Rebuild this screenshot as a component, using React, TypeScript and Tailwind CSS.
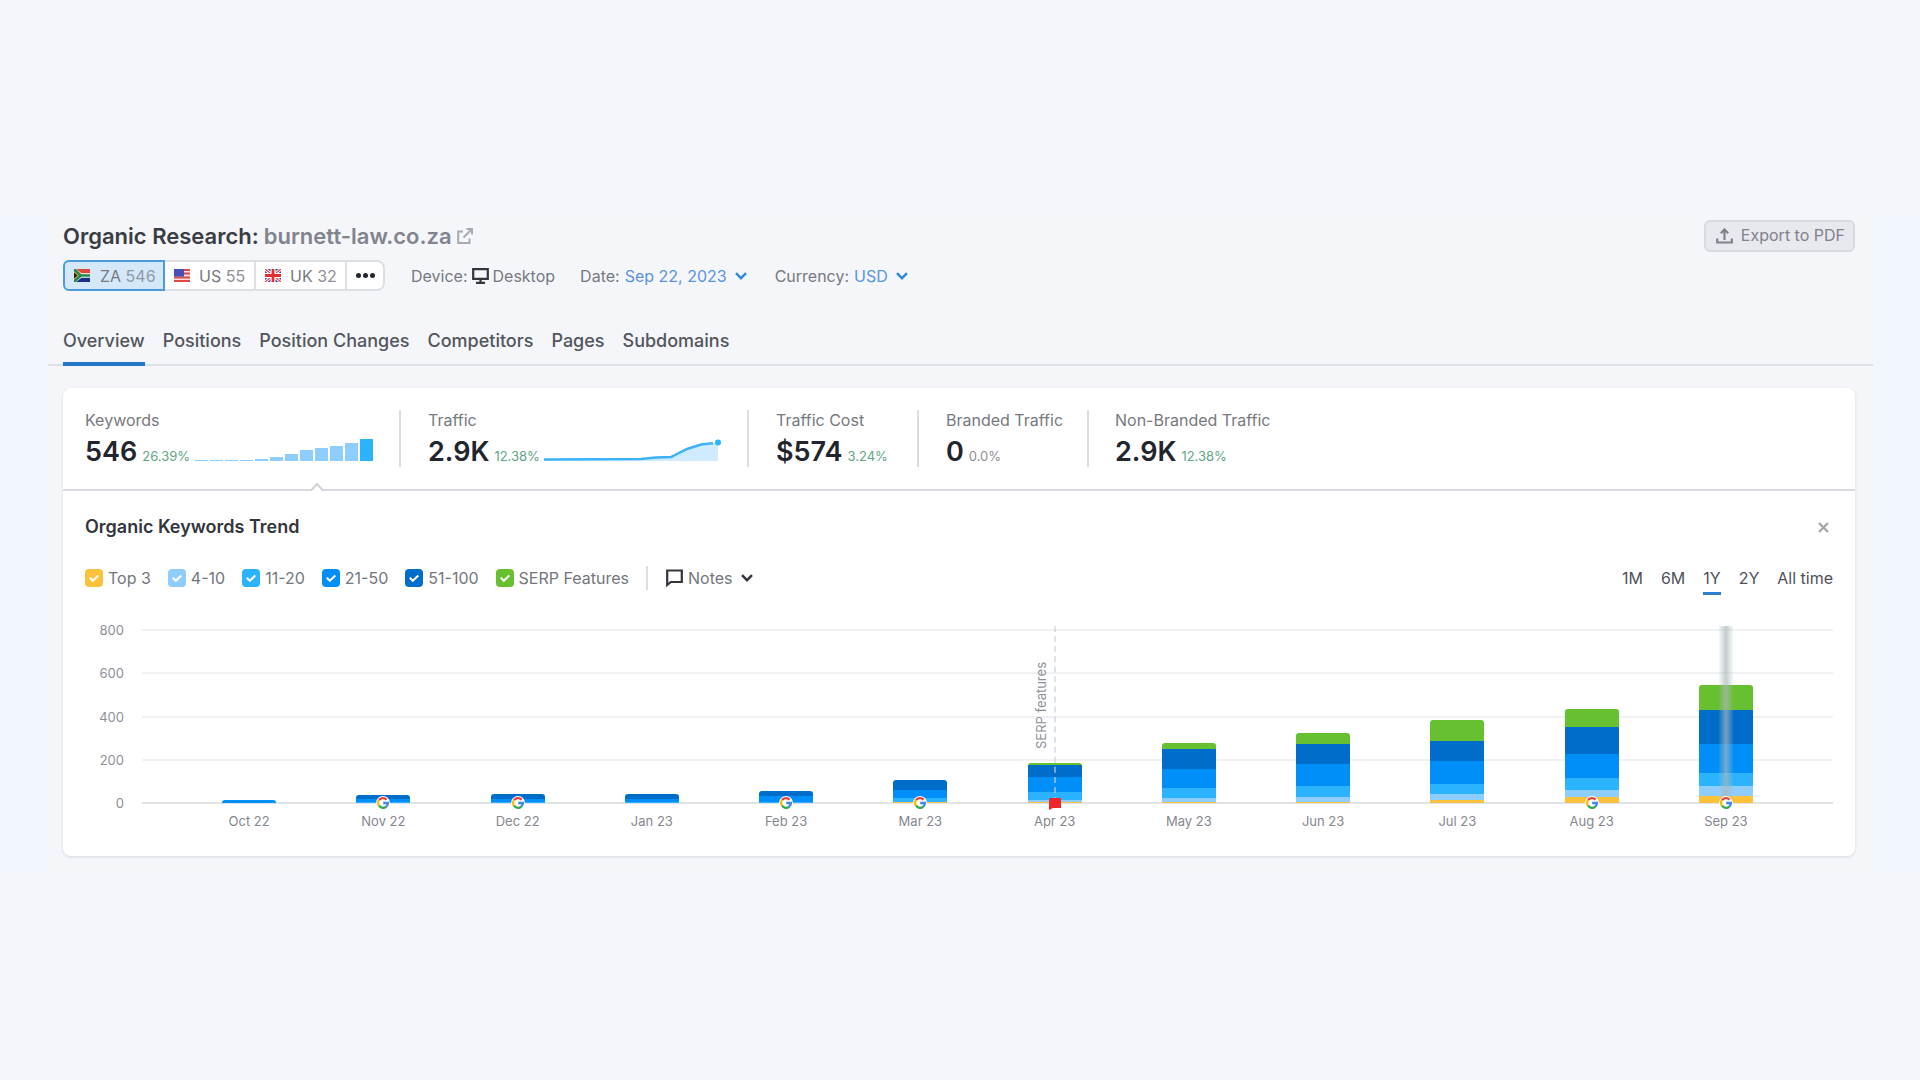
import type { ReactNode } from "react";

const COUNTRIES = [
  { code: "US", count: 55 },
  { code: "UK", count: 32 },
];

const TABS = ["Overview", "Positions", "Position Changes", "Competitors", "Pages", "Subdomains"];

const LEGEND = [
  { label: "Top 3", color: "bg-[#fdc23c]" },
  { label: "4-10", color: "bg-[#8ecdff]" },
  { label: "11-20", color: "bg-[#2bb3ff]" },
  { label: "21-50", color: "bg-[#008ff8]" },
  { label: "51-100", color: "bg-[#006dca]" },
  { label: "SERP Features", color: "bg-[#66c030]" },
];

const RANGES = ["1M", "6M", "1Y", "2Y", "All time"];
const AXIS = [800, 600, 400, 200, 0];
const PLOT_HEIGHT = 173;
const AXIS_MAX = 800;

/* Stack order, top to bottom: SERP features, 51-100, 21-50, 11-20, 4-10, top 3 */
const SEGMENT_COLORS = [
  "bg-[#66c030]",
  "bg-[#006dca]",
  "bg-[#008ff8]",
  "bg-[#2bb3ff]",
  "bg-[#8ecdff]",
  "bg-[#fdc23c]",
];

type Month = { label: string; stack: number[]; mark?: "google" | "note"; line?: "dashed" | "hover" };

const MONTHS: Month[] = [
  { label: "Oct 22", stack: [0, 0, 14, 0, 0, 0] },
  { label: "Nov 22", stack: [0, 18, 14, 5, 0, 0], mark: "google" },
  { label: "Dec 22", stack: [0, 23, 14, 5, 0, 0], mark: "google" },
  { label: "Jan 23", stack: [0, 23, 14, 5, 0, 0] },
  { label: "Feb 23", stack: [0, 23, 28, 5, 0, 0], mark: "google" },
  { label: "Mar 23", stack: [0, 46, 37, 18, 0, 5], mark: "google" },
  { label: "Apr 23", stack: [9, 55, 69, 37, 9, 5], mark: "note", line: "dashed" },
  { label: "May 23", stack: [28, 92, 88, 46, 18, 5] },
  { label: "Jun 23", stack: [51, 92, 102, 51, 23, 5] },
  { label: "Jul 23", stack: [97, 92, 106, 46, 28, 14] },
  { label: "Aug 23", stack: [83, 125, 111, 55, 32, 28], mark: "google" },
  { label: "Sep 23", stack: [116, 157, 134, 60, 46, 32], mark: "google", line: "hover" },
];

const SPARK_BARS = [1, 1, 1, 1, 2, 4, 7, 11, 13, 15, 18, 22];

function FlagZA() {
  return (
    <svg viewBox="0 0 16 13" className="h-[13px] w-4" aria-hidden="true">
      <rect width="16" height="13" fill="#fff" />
      <path d="M2 0h14v4.2H7.5z" fill="#e0483e" />
      <path d="M2 13h14V8.8H7.5z" fill="#1c2f8c" />
      <path d="M0 0h1.8l5.6 5.2H16v2.6H7.4L1.8 13H0z" fill="#1f8a4c" />
      <path d="M0 2.2 5 6.5 0 10.8z" fill="#e9b23a" />
      <path d="M0 3.4 3.7 6.5 0 9.6z" fill="#222" />
    </svg>
  );
}

function FlagUS() {
  return (
    <svg viewBox="0 0 16 13" className="h-[13px] w-4" aria-hidden="true">
      <rect width="16" height="13" fill="#f7dcdc" />
      <path d="M0 1h16M0 4.6h16M0 8.4h16M0 12h16" stroke="#dd4a4a" strokeWidth="2" />
      <rect width="10" height="7.6" fill="#4650b4" />
    </svg>
  );
}

function FlagUK() {
  return (
    <svg viewBox="0 0 16 13" className="h-[13px] w-4" aria-hidden="true">
      <rect width="16" height="13" rx="1" fill="#3f4db0" />
      <path d="M0 0l16 13M16 0L0 13" stroke="#fff" strokeWidth="3" />
      <path d="M0 0l16 13M16 0L0 13" stroke="#e0403f" strokeWidth="1.2" />
      <path d="M8 0v13M0 6.5h16" stroke="#fff" strokeWidth="5" />
      <path d="M8 0v13M0 6.5h16" stroke="#e0302f" strokeWidth="2.8" />
    </svg>
  );
}

function Chevron({ className }: { className: string }) {
  return (
    <svg viewBox="0 0 12 8" className={className} fill="none" stroke="currentColor" strokeWidth="2.4" aria-hidden="true">
      <path d="M1 1.2 6 6.2l5-5" />
    </svg>
  );
}

function GoogleMark() {
  return (
    <svg viewBox="0 0 14 14" className="size-3.5" aria-hidden="true">
      <circle cx="7" cy="7" r="7" fill="#fff" />
      <g fill="none" strokeWidth="2.3">
        <path d="M3 4.2A4.9 4.9 0 0 1 10.6 3.6" stroke="#ea4335" />
        <path d="M3 9.7A4.9 4.9 0 0 1 3 4.2" stroke="#fbbc05" />
        <path d="M10.3 10.6A4.9 4.9 0 0 1 3 9.7" stroke="#34a853" />
        <path d="M7.2 7h4.7A4.9 4.9 0 0 1 10.3 10.6" stroke="#4285f4" />
      </g>
    </svg>
  );
}

function NoteMark() {
  return (
    <svg viewBox="0 0 12 12" className="size-3" aria-hidden="true">
      <path d="M1 0h11v10H4l-4 2V1z" fill="#f0262d" />
    </svg>
  );
}

function Metric({
  label,
  value,
  change,
  muted,
  className,
  children,
}: {
  label: string;
  value: string;
  change: string;
  muted?: boolean;
  className: string;
  children?: ReactNode;
}) {
  return (
    <div className={`h-[57px] ${className}`}>
      <div className="text-base leading-5 text-[#777980]">{label}</div>
      <div className="mt-1.5 flex items-baseline">
        <span className="text-[27px] leading-8 font-semibold text-[#22252e]">{value}</span>
        <span className={`ml-[5px] text-[13px] ${muted ? "text-[#8e9099]" : "text-[#5fa586]"}`}>{change}</span>
        {children}
      </div>
    </div>
  );
}

function Header() {
  return (
    <header className="pr-[18px] pl-[15px] pt-1">
      <div className="flex h-8 items-center justify-between">
        <h1 className="flex items-center text-[22px] font-semibold text-[#3a3d44]">
          Organic Research:
          <a href="#site" className="ml-[5px] flex items-center text-[#81848e]">
            burnett-law.co.za
            <svg viewBox="0 0 16 16" className="ml-[5px] size-4" fill="none" stroke="#a9abb3" strokeWidth="2" aria-hidden="true">
              <path d="M6 3.5H1.2V15h11.3v-4.5M9.5 1H15v5.5M15 1 6.5 9.5" />
            </svg>
          </a>
        </h1>
        <button className="flex h-8 items-center rounded-md border-2 border-[#d8dae0] bg-[#e8e9ef] pr-2 pl-2.5 text-[#7f818b]">
          <svg viewBox="0 0 17 16" className="mr-2 h-4 w-[17px]" fill="none" stroke="currentColor" strokeWidth="2.2" aria-hidden="true">
            <path d="M1.2 10.5v4h14.6v-4M8.500 12V2M4.800 5.200 8.500 1.500l3.700 3.700" />
          </svg>
          <span className="pb-0.5 text-base leading-5">Export to PDF</span>
        </button>
      </div>

      <div className="mt-2 flex h-[31px] items-center text-base text-[#777980]">
        <div className="flex h-[31px]" role="group" aria-label="Country">
          <button aria-pressed="true" className="flex w-[102px] items-center rounded-l-md border-2 border-[#4a9be0] bg-[#d5e8fa] pl-[9px]">
            <FlagZA />
            <span className="ml-2.5">ZA <span className="text-[#8d98a5]">546</span></span>
          </button>
          {COUNTRIES.map((c) => (
            <button key={c.code} className="flex w-[91px] items-center border-y-2 border-r-2 border-[#dddfe5] bg-white pl-[9px]">
              {c.code === "US" ? <FlagUS /> : <FlagUK />}
              <span className="ml-[9px]">{c.code} <span className="text-[#8e9099]">{c.count}</span></span>
            </button>
          ))}
          <button aria-label="More countries" className="flex w-[38px] items-center justify-center gap-0.5 rounded-r-lg border-y-2 border-r-2 border-[#dddfe5] bg-white">
            <i className="size-[5px] rounded-full bg-[#22252e]" />
            <i className="size-[5px] rounded-full bg-[#22252e]" />
            <i className="size-[5px] rounded-full bg-[#22252e]" />
          </button>
        </div>
        <div className="ml-[26px] flex items-center">
          Device:
          <svg viewBox="0 0 17 16" className="mx-1 h-4 w-[17px]" fill="none" stroke="#33363d" strokeWidth="2.2" aria-hidden="true">
            <path d="M1.200 1.200h14.600v9.600H1.200zM4 14.900h9M8.500 11v4" />
          </svg>
          Desktop
        </div>
        <div className="ml-[25px] flex items-center">
          Date:
          <button className="ml-[5px] flex items-center text-[#5b93dd]">
            Sep 22, 2023
            <Chevron className="ml-2 h-2 w-3 text-[#2f8ad8]" />
          </button>
        </div>
        <div className="ml-7 flex items-center">
          <label htmlFor="currency">Currency:</label>
          <select id="currency" className="ml-[5px] appearance-none bg-transparent text-[#5b93dd]">
            <option>USD</option>
          </select>
          <Chevron className="ml-2 h-2 w-3 text-[#2f8ad8]" />
        </div>
      </div>
    </header>
  );
}

function Tabs() {
  return (
    <nav className="mt-[34px] flex gap-[18px] border-b-2 border-[#dee0e5] px-[15px]">
      {TABS.map((t, i) => (
        <a
          key={t}
          href={`#${t}`}
          className={`-mb-0.5 h-[41px] text-lg leading-8 font-medium text-[#53555c] ${
            i === 0 ? "border-b-4 border-[#2277c5]" : ""
          }`}
        >
          {t}
        </a>
      ))}
    </nav>
  );
}

function Metrics() {
  return (
    <div className="relative flex border-b-2 border-[#dadbe0] px-[22px] py-[22px]">
      <Metric label="Keywords" value="546" change="26.39%" className="w-[316px] border-r-2 border-[#dcdde1]">
        <span className="ml-[5px] flex h-[22px] items-end gap-0.5" aria-hidden="true">
          {SPARK_BARS.map((h, i) => (
            <i
              key={i}
              className={`w-[13px] ${i === SPARK_BARS.length - 1 ? "bg-[#2bb3ff]" : "bg-[#8ecdff]"}`}
              style={{ height: h }}
            />
          ))}
        </span>
      </Metric>
      <Metric label="Traffic" value="2.9K" change="12.38%" className="ml-[27px] w-[321px] border-r-2 border-[#dcdde1]">
        <svg viewBox="0 0 178 22" className="ml-1 h-[22px] w-[178px]" aria-hidden="true">
          <path d="M0 20.500 97 20 112 18.500 127 18 143 10 157 5.500 174 3.500V22H0z" fill="#cfebfd" />
          <path d="M0 20.500 97 20 112 18.500 127 18 143 10 157 5.500 169 4.300" fill="none" stroke="#3db2fb" strokeWidth="2.5" />
          <circle cx="174" cy="3.500" r="3" fill="#2bb3ff" />
        </svg>
      </Metric>
      <Metric label="Traffic Cost" value="$574" change="3.24%" className="ml-[27px] w-[143px] border-r-2 border-[#dcdde1]" />
      <Metric label="Branded Traffic" value="0" change="0.0%" muted className="ml-[27px] w-[143px] border-r-2 border-[#dcdde1]" />
      <Metric label="Non-Branded Traffic" value="2.9K" change="12.38%" className="ml-[26px]" />
      <svg viewBox="0 0 14 9" className="absolute -bottom-0.5 left-[247px] h-[9px] w-3.5" aria-hidden="true">
        <path d="M0 9 7 1l7 8z" fill="#fff" />
        <path d="M0 8h1.500L7 2l5.500 6H14" fill="none" stroke="#d0d2d8" strokeWidth="2" />
      </svg>
    </div>
  );
}

function Controls() {
  return (
    <div className="mt-5 flex h-[38px] items-center justify-between text-base text-[#74767d]">
      <div className="flex items-center">
        <div className="flex items-center gap-[17px]">
          {LEGEND.map((l) => (
            <label key={l.label} className="relative flex items-center gap-[5px]">
              <input type="checkbox" defaultChecked className={`size-[18px] appearance-none rounded ${l.color}`} />
              <svg viewBox="0 0 18 18" className="pointer-events-none absolute left-0 size-[18px]" fill="none" stroke="#fff" strokeWidth="2" aria-hidden="true">
                <path d="M4.800 8.800 7.800 11.800 13.300 6.500" />
              </svg>
              {l.label}
            </label>
          ))}
        </div>
        <div className="ml-[17px] h-6 w-0.5 bg-[#dcdde1]" />
        <button className="ml-[18px] flex items-center">
          <svg viewBox="0 0 17 18" className="mr-[5px] h-[18px] w-[17px]" fill="none" stroke="#33363d" strokeWidth="2.2" aria-hidden="true">
            <path d="M1.200 1.500h14.600v11.500H4.800L1.200 16z" />
          </svg>
          Notes
          <Chevron className="ml-2 h-2 w-3 text-[#33363d]" />
        </button>
      </div>
      <div className="flex items-center gap-[18px] text-[#4f5158]" role="group" aria-label="Period">
        {RANGES.map((r) => (
          <button key={r} className={`h-[34px] border-y-[3px] border-t-transparent ${r === "1Y" ? "border-b-[#2f80cc]" : "border-b-transparent"}`}>
            {r}
          </button>
        ))}
      </div>
    </div>
  );
}

function Column({ month }: { month: Month }) {
  return (
    <div className="relative flex h-full flex-1 flex-col items-center justify-end">
      <div className="w-[54px] overflow-hidden rounded-t-[3px]">
        {month.stack.map((n, i) => (
          <div key={i} className={SEGMENT_COLORS[i]} style={{ height: Math.round((n * PLOT_HEIGHT) / AXIS_MAX) }} />
        ))}
      </div>
      {month.line === "dashed" && (
        <>
          <div className="absolute -top-1 bottom-0 left-1/2 -ml-px border-l-2 border-dashed border-[#c9ced6]/60" />
          <div className="absolute top-8 right-1/2 mr-1 rotate-180 text-[13px] leading-5 text-[#8e9099] [writing-mode:vertical-rl]">
            SERP features
          </div>
        </>
      )}
      {month.line === "hover" && (
        <div className="absolute -top-1 bottom-0 left-1/2 w-3.5 -translate-x-1/2 bg-linear-to-r from-[#a9b8b8]/10 via-[#a9b8b8]/70 to-[#a9b8b8]/10" />
      )}
      {month.mark && (
        <div className="absolute -bottom-[7px] left-1/2 -translate-x-1/2">
          {month.mark === "google" ? <GoogleMark /> : <NoteMark />}
        </div>
      )}
      <div className="absolute top-full mt-2 text-[13px] leading-5 whitespace-nowrap text-[#85878f]">{month.label}</div>
    </div>
  );
}

function Chart() {
  return (
    <div className="mt-[33px] flex pb-[53px]">
      <div className="-my-2.5 flex w-[39px] flex-col justify-between text-right text-[13px] leading-5 text-[#8e9098]">
        {AXIS.map((v) => (
          <span key={v}>{v}</span>
        ))}
      </div>
      <div className="relative ml-[18px] h-[173px] flex-1">
        <div className="absolute inset-x-0 -top-px -bottom-px flex flex-col justify-between">
          {AXIS.map((v) => (
            <div key={v} className={`h-0.5 ${v === 0 ? "bg-[#e1e3e9]" : "bg-[#f0f1f4]"}`} />
          ))}
        </div>
        <div className="relative flex h-full px-10">
          {MONTHS.map((m) => (
            <Column key={m.label} month={m} />
          ))}
        </div>
      </div>
    </div>
  );
}

export default function App() {
  return (
    <div className="min-h-screen bg-[#f4f6fb] pt-54 font-['Inter',sans-serif]">
      <div className="bg-[#f1f5fe] pr-[47px] pl-12">
        <main className="bg-[#f4f6fa] pb-4">
          <Header />
          <Tabs />
          <section className="mt-[22px] mr-[18px] ml-[15px] rounded-lg bg-white shadow-[0_1px_3px_rgba(30,35,60,0.14)]">
            <Metrics />
            <div className="px-[22px] pt-6">
              <div className="flex h-6 items-center justify-between">
                <h2 className="text-lg font-semibold text-[#33363d]">Organic Keywords Trend</h2>
                <button aria-label="Close" className="mr-1">
                  <svg viewBox="0 0 11 11" className="size-[11px]" fill="none" stroke="#a6a8b0" strokeWidth="2.4" aria-hidden="true">
                    <path d="m1 1 9 9M10 1l-9 9" />
                  </svg>
                </button>
              </div>
              <Controls />
              <Chart />
            </div>
          </section>
        </main>
      </div>
    </div>
  );
}
